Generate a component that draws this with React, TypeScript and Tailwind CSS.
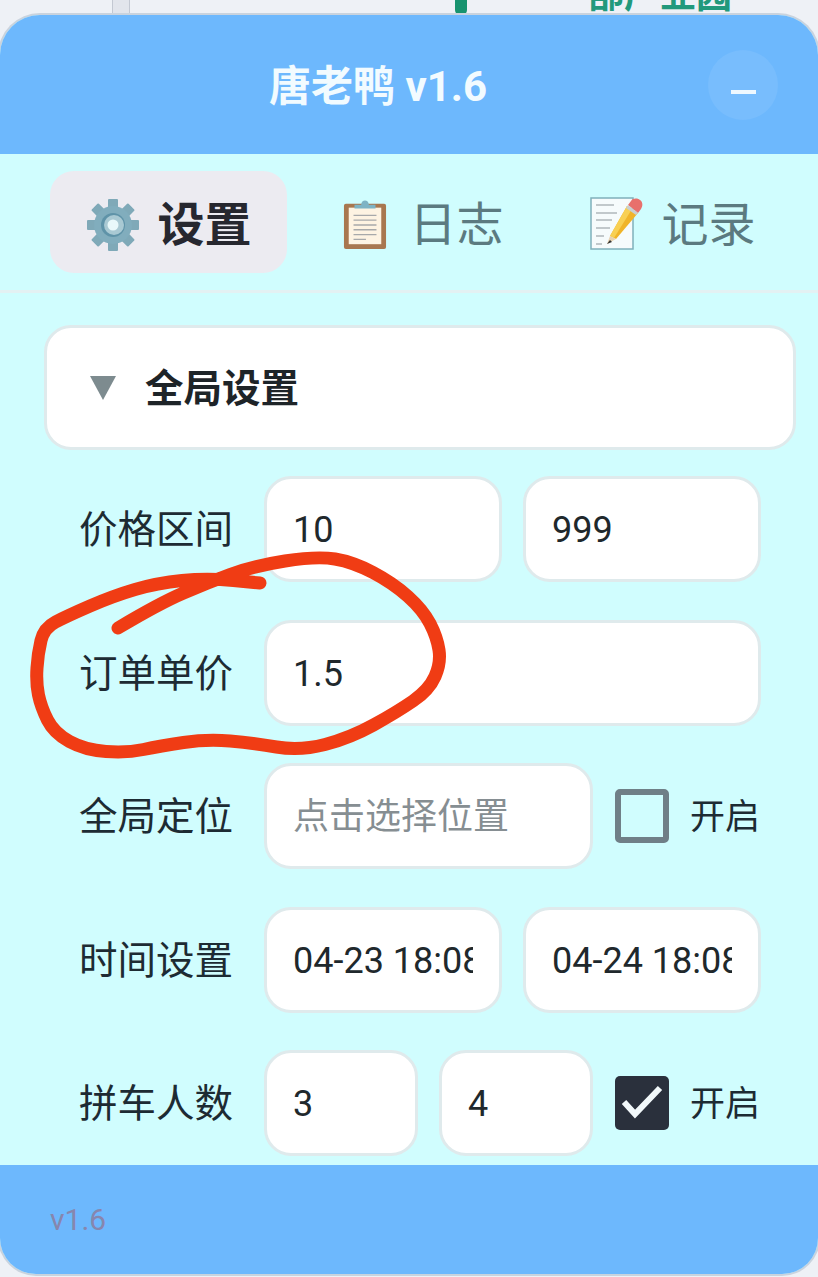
const sans = "font-['Roboto','Noto_Sans_CJK_SC',sans-serif]";

const loop: [number, number][] = [
  [118, 628], [160, 603], [207, 583], [253, 566], [317, 556], [353, 562], [393, 583], [423, 610], [437, 637], [441, 663],
  [429, 690], [397, 712], [350, 738], [300, 751], [253, 743], [207, 739], [160, 746], [127, 753], [85, 750], [54, 733],
  [41, 707], [36, 683], [38, 653], [44, 628], [67, 616], [113, 596], [157, 583], [207, 578], [260, 583],
];

function smooth(points: [number, number][]) {
  let d = `M${points[0][0]} ${points[0][1]}`;
  for (let i = 1; i < points.length - 1; i++) {
    const mx = (points[i][0] + points[i + 1][0]) / 2;
    const my = (points[i][1] + points[i + 1][1]) / 2;
    d += `Q${points[i][0]} ${points[i][1]} ${mx} ${my}`;
  }
  const last = points[points.length - 1];
  return `${d}L${last[0]} ${last[1]}`;
}

function Gear() {
  const teeth = [0, 45, 90, 135, 180, 225, 270, 315];
  return (
    <svg width="54" height="54" viewBox="0 0 54 54" className="mt-[5px]">
      {teeth.map((a) => (
        <rect key={a} x="22" y="1" width="10" height="12" rx="1" fill="#7fa9b8" transform={`rotate(${a} 27 27)`} />
      ))}
      <circle cx="27" cy="27" r="19" fill="#81adbd" />
      <circle cx="27" cy="27" r="12" fill="#5f93a8" />
      <circle cx="28" cy="27" r="10" fill="#a9c9d3" />
      <circle cx="27" cy="27" r="5.5" fill="#e9f8fa" />
    </svg>
  );
}

function Clipboard() {
  return (
    <svg width="44" height="50" viewBox="0 0 46 52" preserveAspectRatio="none" className="ml-[5px] mr-[5px] mt-[3px]">
      <rect x="1" y="5" width="44" height="47" rx="2" fill="#a8774f" />
      <rect x="6" y="9" width="34" height="38" fill="#fdf3e2" />
      <path d="M11 17H35M11 22H35M11 27H35M11 32H35M11 37H35M11 42H24" stroke="#a7a9aa" strokeWidth="1.4" />
      <path d="M12 10V6H19C19 0 27 0 27 6H34V10Z" fill="#7eb3c4" />
    </svg>
  );
}

function Memo() {
  return (
    <svg width="54" height="54" viewBox="0 0 54 54" className="mt-[4px]">
      <rect x="1" y="1" width="42" height="51" fill="#f6fbfc" stroke="#7fb0bb" strokeWidth="1.5" />
      <path d="M6 8H24M6 16H27M6 23H22M6 31H20M6 39H14M6 47H12" stroke="#8c9699" strokeWidth="1.2" />
      <path d="M37 9L48 16L26 42L20 39Z" fill="#f0b429" />
      <path d="M37 9L42 12L24 41L20 39Z" fill="#f8d053" />
      <path d="M20 39L26 42L17 47Z" fill="#e8d2b0" />
      <path d="M20 43L22 45L17 47Z" fill="#333" />
      <path d="M38 8L41 4C43 1 47 1 50 3C53 5 53 9 51 12L48 16Z" fill="#e8706c" />
      <path d="M38 8L48 16L46 18L36 11Z" fill="#c9cfd0" />
    </svg>
  );
}

function Field({ value, placeholder, className }: { value?: string; placeholder?: string; className: string }) {
  return (
    <input
      readOnly
      value={value ?? ""}
      placeholder={placeholder}
      className={`${className} h-[106px] min-w-0 rounded-[27px] border-[3px] border-[#dfeaec] bg-white pl-[26px] pr-[26px] pt-[2px] text-[36px] text-[#20282c] placeholder:text-[#868e92] outline-none ${sans}`}
    />
  );
}

function Row({ label, children }: { label: string; children: React.ReactNode }) {
  return (
    <div className="flex items-center">
      <div className="w-[185px] shrink-0 whitespace-nowrap pt-[3px] text-[38.5px] leading-none text-[#1d2b33]">{label}</div>
      {children}
    </div>
  );
}

function Toggle({ checked }: { checked: boolean }) {
  return (
    <div className="ml-[22px] flex shrink-0 items-center">
      {checked ? (
        <div className="flex size-[54px] items-center justify-center rounded-[5px] bg-[#2a303c]">
          <svg width="44" height="44" viewBox="0 0 44 44">
            <path d="M4 21L15 33L40 7" fill="none" stroke="#f2f8fa" strokeWidth="6" />
          </svg>
        </div>
      ) : (
        <div className="size-[54px] rounded-[5px] border-[6px] border-[#6f7f87]" />
      )}
      <span className="ml-[21px] whitespace-nowrap pt-[3px] text-[35px] leading-none text-[#1d2b33]">开启</span>
    </div>
  );
}

function Tab({ icon, label, active }: { icon: React.ReactNode; label: string; active?: boolean }) {
  return (
    <div
      className={`flex h-[102px] w-[237px] items-center justify-center gap-[18px] rounded-[24px] ${
        active ? "bg-[#ecebf1] font-bold text-[#26272f]" : "text-[#5b7a80]"
      }`}
    >
      {icon}
      <span className="pt-[5px] text-[47px] leading-none">{label}</span>
    </div>
  );
}

export default function App() {
  return (
    <div className={`relative h-[1277px] w-[818px] overflow-hidden bg-[#eef1f6] ${sans}`}>
      <div className="absolute left-[588px] top-[-22px] whitespace-nowrap text-[36px] font-bold leading-none text-[#22997c]">
        部产业园
      </div>
      <div className="absolute left-[455px] top-0 h-[16px] w-[12px] rounded-b-[6px] bg-[#17936f]" />
      <div className="absolute left-[112px] top-0 h-[16px] w-[18px] border-x border-[#c3c8d2] bg-[#e2e5ec]" />
      <div className="relative mt-[15px] flex h-[1259px] flex-col overflow-hidden rounded-t-[40px] rounded-b-[36px] bg-[#d0fdfe] shadow-[0_0_0_2px_#c9d3de]">
        <header className="relative flex h-[139px] shrink-0 items-center justify-center bg-[#6db8fd]">
          <h1 className="mr-[62px] pt-[4px] text-[42px] font-bold leading-none text-[#f2fbff]">唐老鸭 v1.6</h1>
          <div className="absolute right-[40px] top-[35px] flex size-[70px] items-center justify-center rounded-full bg-[#78bdfd] pt-[14px]">
            <span className="h-[4px] w-[25px] bg-[#eef8ff]" />
          </div>
        </header>
        <nav className="flex h-[139px] shrink-0 items-center justify-between border-b-[3px] border-[#e3f1f3] pl-[50px] pr-[27px]">
          <Tab active icon={<Gear />} label="设置" />
          <Tab icon={<Clipboard />} label="日志" />
          <Tab icon={<Memo />} label="记录" />
        </nav>
        <main className="min-h-0 flex-1 overflow-hidden pl-[44px] pr-[22px] pt-[32px]">
          <div className="flex h-[125px] items-center rounded-[27px] border-[3px] border-[#dfeaec] bg-white pl-[42px]">
            <svg width="28" height="26" viewBox="0 0 28 26">
              <path d="M1 1H27L14 25Z" fill="#7d8b8f" />
            </svg>
            <span className="ml-[28px] pt-[3px] text-[38.5px] font-bold leading-none text-[#1e2428]">全局设置</span>
          </div>
          <div className="mt-[26px] flex flex-col gap-[37.5px] pl-[35px] pr-[35px]">
            <Row label="价格区间">
              <div className="flex flex-1 gap-[21px]">
                <Field className="w-0 flex-1" value="10" />
                <Field className="w-0 flex-1" value="999" />
              </div>
            </Row>
            <Row label="订单单价">
              <Field className="w-0 flex-1" value="1.5" />
            </Row>
            <Row label="全局定位">
              <Field className="w-[329px]" placeholder="点击选择位置" />
              <Toggle checked={false} />
            </Row>
            <Row label="时间设置">
              <div className="flex flex-1 gap-[21px]">
                <Field className="w-0 flex-1" value="04-23 18:08" />
                <Field className="w-0 flex-1" value="04-24 18:08" />
              </div>
            </Row>
            <Row label="拼车人数">
              <div className="flex w-[329px] gap-[21px]">
                <Field className="w-0 flex-1" value="3" />
                <Field className="w-0 flex-1" value="4" />
              </div>
              <Toggle checked />
            </Row>
          </div>
        </main>
        <footer className="flex h-[109px] shrink-0 items-center bg-[#6db8fd] pl-[50px]">
          <span className="text-[30px] leading-none text-[#8786ae]">v1.6</span>
        </footer>
      </div>
      <svg className="pointer-events-none absolute left-0 top-0" width="818" height="1277" viewBox="0 0 818 1277">
        <path d={smooth(loop)} fill="none" stroke="#f03c14" strokeWidth="13" strokeLinecap="round" strokeLinejoin="round" />
      </svg>
    </div>
  );
}
